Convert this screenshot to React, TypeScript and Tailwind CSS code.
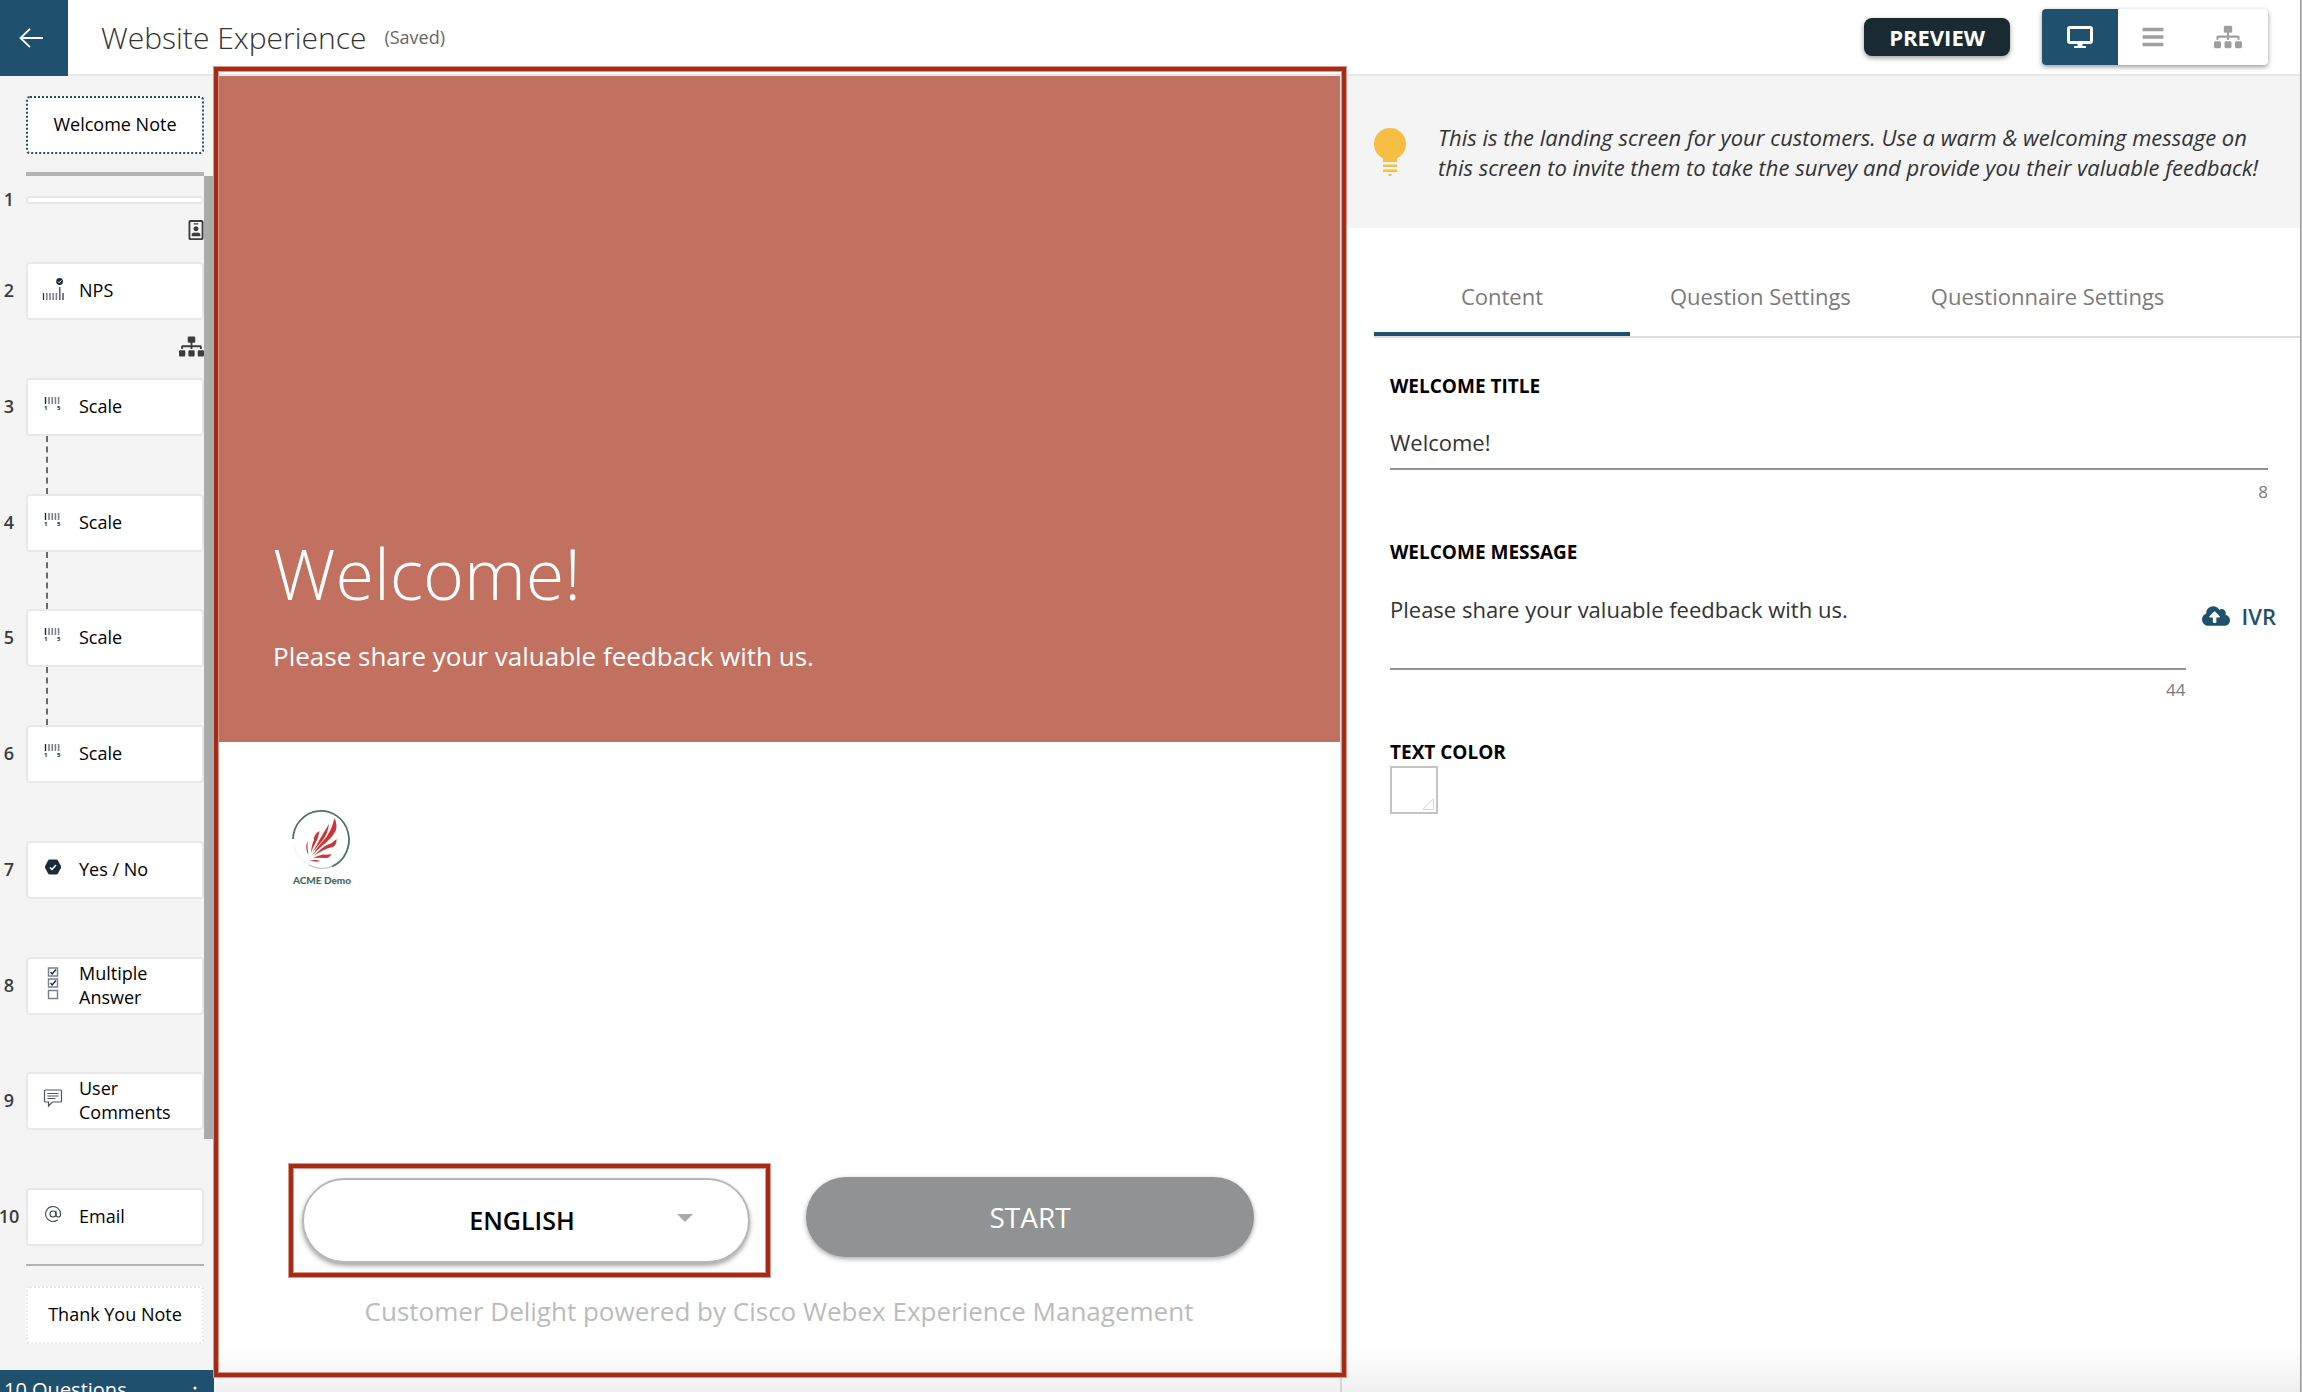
import { clsx } from "clsx";
import { AtSign } from "lucide-react";
import { memo, useState, type ReactNode } from "react";
import { FaBars, FaCloudUploadAlt, FaRegIdBadge, FaSitemap } from "react-icons/fa";

type Question = {
    id: number;
    label?: string;
    icon?: ReactNode;
    badge?: ReactNode;
    linked?: boolean;
};

const ScaleIcon = () => (
    <svg className="size-6" viewBox="0 0 24 24" fill="none">
        <path d="M4.5 5v7" stroke="#1c2b3a" strokeWidth="1.4" />
        <path d="M8 5v7M11.2 5v7M14.4 5v7M17.6 5v7" stroke="#7b838c" strokeWidth="1.6" />
        <text x="3" y="18" fontSize="6" fontWeight="700" fill="#1c2b3a">
            1
        </text>
        <text x="16" y="18" fontSize="6" fontWeight="700" fill="#1c2b3a">
            5
        </text>
    </svg>
);

const NpsIcon = () => (
    <svg className="size-6" viewBox="0 0 24 24" fill="none">
        <path d="M2.5 17v7M22 17v7" stroke="#1c2b3a" strokeWidth="1.2" />
        <path d="M5.8 17v7M9 17v7M12.2 17v7M15.4 17v7" stroke="#7b838c" strokeWidth="1.6" />
        <path d="M18.8 11v13" stroke="#4a5560" strokeWidth="1.4" />
        <circle cx="18.6" cy="5.5" r="3.4" fill="#1c2b3a" />
        <path d="M17 5.5l1.2 1.2L20.4 4.4" stroke="#fff" />
    </svg>
);

const YesNoIcon = () => (
    <svg className="size-6" viewBox="0 0 24 24" fill="none">
        <path
            d="M8.6 4.5h6.8q1 0 1.5.9l3 5.6q.5 1 0 2l-3 5.6q-.5.9-1.5.9H8.6q-1 0-1.5-.9l-3-5.6q-.5-1 0-2l3-5.6q.5-.9 1.5-.9z"
            fill="#1c2b3a"
        />
        <path d="M9 12.5l2 2 4-4.5" stroke="#fff" strokeWidth="1.5" />
    </svg>
);

const MultipleIcon = () => (
    <svg className="h-9 w-3" viewBox="0 0 12 36" fill="none" stroke="#7b7f8c" strokeWidth="1.4">
        <path d="M1.5 3h9v8h-9zM1.5 14h9v8h-9zM1.5 25.5h9v8h-9z" />
        <path d="M3.5 7l1.7 2L9 4.5M3.5 18l1.7 2L9 15.5" stroke="#1c2b3a" />
    </svg>
);

const CommentsIcon = () => (
    <svg className="size-6" viewBox="0 0 24 24" fill="none" stroke="#4a5560" strokeWidth="1.2">
        <path d="M4.5 4h15q1 0 1 1v10q0 1-1 1h-8l-4 4v-4h-3q-1 0-1-1V5q0-1 1-1z" />
        <path d="M6.5 7.5h11M6.5 10h11M6.5 12.5h8" />
    </svg>
);

const MonitorIcon = () => (
    <svg className="h-6 w-[26px]" viewBox="0 0 26 24" fill="none">
        <rect x="1.5" y="2.5" width="23" height="15" rx="1.5" stroke="currentColor" strokeWidth="3" />
        <path d="M10.5 18h5v3h3.5v2H7v-2h3.5z" fill="currentColor" />
    </svg>
);

const BulbIcon = () => (
    <svg className="h-12 w-8 shrink-0" viewBox="0 0 32 48" fill="#f6bf43">
        <path d="M16 0a16 16 0 0 1 7 30.4V34H9v-3.6A16 16 0 0 1 16 0z" />
        <path d="M9 36.5h14v2.5H9zM9 41.5h14v2.5H9zM14 46h4l-1 2h-2z" />
    </svg>
);

const AcmeLogo = () => (
    <svg className="h-[82px] w-[66px]" viewBox="0 0 66 82" fill="none" role="img" aria-label="ACME Demo">
        <path d="M4 32A28 29 0 1 1 43 59.5" stroke="#4d7468" strokeWidth="1.8" />
        <path d="M43 59.5A28 29 0 0 1 20 58" stroke="#a9bfb8" strokeWidth="1.2" />
        <path d="M20 58Q8 51 5 40" stroke="#dfe8e5" strokeWidth=".8" />
        <g fill="#cf3338">
            <path d="M45.5 11Q49 19 46.5 24 43 31 34 38 27 44 23 49 28 40 34 34 42 26 45.5 11z" />
            <path d="M40 17q-1 9-6 16-6 7-11 13 5-8 8-14 4-7 9-15z" />
            <path d="M30.5 24q-1 7-4 12-3 5-4.5 10 .5-8 3-13-1-5 5.500-9z" />
            <path d="M18.5 34q-.5 7 1 14-4-7-1-14z" />
            <path d="M47.5 32q.5 6-4 8-9 2-18.5 9 7-8 13-11 6-2 9.5-6z" />
            <path d="M42.5 47q-2 4-5.5 4-7-.5-13 0 6-3 10-3.5 5 .5 8.5-.5z" />
            <path d="M20.5 53.5q6-1 11 .5-5 1.5-11-.5z" />
        </g>
        <text
            x="33"
            y="77"
            textAnchor="middle"
            fontSize="10"
            fontWeight="900"
            fill="#44695d"
            className="font-['Lato',sans-serif]"
        >
            ACME Demo
        </text>
    </svg>
);

const questions: Question[] = [
    { id: 2, label: "NPS", icon: <NpsIcon />, badge: <FaSitemap className="size-[25px]" /> },
    { id: 3, label: "Scale", icon: <ScaleIcon />, linked: true },
    { id: 4, label: "Scale", icon: <ScaleIcon />, linked: true },
    { id: 5, label: "Scale", icon: <ScaleIcon />, linked: true },
    { id: 6, label: "Scale", icon: <ScaleIcon /> },
    { id: 7, label: "Yes / No", icon: <YesNoIcon /> },
    { id: 8, label: "Multiple Answer", icon: <MultipleIcon /> },
    { id: 9, label: "User Comments", icon: <CommentsIcon /> },
    { id: 10, label: "Email", icon: <AtSign className="size-[18px] text-[#3a4652]" strokeWidth={1.5} /> },
];

const tabs = ["Content", "Question Settings", "Questionnaire Settings"];

const QuestionRow = ({ question, last }: { question: Question; last: boolean }) => (
    <li className={clsx("flex flex-col", last ? "shrink-0" : "flex-1")}>
        <div className="flex items-center">
            <span className="flex w-[26px] shrink-0 justify-center pr-2 pb-[2px] text-lg font-semibold text-[#3c3c3c]">
                {question.id}
            </span>
            <button className="flex h-[58px] flex-1 items-center rounded-sm border-2 border-[#e8e8e8] bg-white pb-[2px] text-left text-lg leading-6 text-black">
                <span className="flex w-[51px] shrink-0 justify-center pr-[2px] pb-1">{question.icon}</span>
                <span className="flex-1 pr-4">{question.label}</span>
            </button>
        </div>
        {question.badge && <div className="flex justify-end pt-[14px] text-[#3c3c3c]">{question.badge}</div>}
        {question.linked && <div className="ml-[46px] flex-1 border-l-2 border-dashed border-[#6b6b6b]" />}
    </li>
);

const Sidebar = () => (
    <aside className="flex min-h-0 flex-col bg-[#f4f4f4]">
        <div className="pt-5 pr-[10px] pl-[26px]">
            <button className="h-[58px] w-full rounded-sm border-2 border-dotted border-[#1f506e] bg-white pb-[2px] text-lg text-black">
                Welcome Note
            </button>
            <div className="mt-[18px] h-1 bg-[#b3b3b3]" />
        </div>
        <div className="flex min-h-0 flex-1">
            <ol className="flex flex-1 flex-col pt-3">
                <li className="flex h-[74px] shrink-0 flex-col">
                    <div className="flex items-center">
                        <span className="flex w-[26px] shrink-0 justify-center pr-2 pb-[2px] text-lg leading-[22px] font-semibold text-[#3c3c3c]">
                            1
                        </span>
                        <button
                            aria-label="Question 1"
                            className="h-2 flex-1 rounded-sm border-2 border-[#e8e8e8] bg-white"
                        />
                    </div>
                    <FaRegIdBadge className="mt-2 h-5 w-4 self-end text-[#3c3c3c]" />
                </li>
                {questions.map((q, i) => (
                    <QuestionRow key={q.id} question={q} last={i === questions.length - 1} />
                ))}
            </ol>
            <div className="w-[10px] shrink-0">
                <div className="h-9/10 bg-[#ababab]" />
            </div>
        </div>
        <div className="pt-[18px] pr-[10px] pb-[26px] pl-[26px]">
            <div className="h-[2px] bg-[#b3b3b3]" />
            <button className="mt-5 h-[58px] w-full rounded-sm border-2 border-dotted border-[#e8e8e8] bg-white pb-[2px] text-lg text-black">
                Thank You Note
            </button>
        </div>
        <div className="flex h-[22px] shrink-0 items-start justify-between bg-[#1f506e] pr-3 pl-1 text-xl leading-10 text-white">
            <span>10 Questions</span>
            <svg className="h-6 w-[14px]" viewBox="0 0 14 24" fill="currentColor">
                <circle cx="7" cy="18" r="1.5" />
            </svg>
        </div>
    </aside>
);

const Preview = () => (
    <main className="flex min-h-0 flex-col border-r-2 border-[#e0e0e0] bg-white pl-1">
        <div className="flex h-[666px] shrink-0 flex-col justify-end bg-[#c27060] pb-[68px] pl-[55px] text-white">
            <h2 className="text-[70px] leading-[94px] font-light">Welcome!</h2>
            <p className="mt-[18px] text-[26px] leading-9">Please share your valuable feedback with us.</p>
        </div>
        <div className="flex flex-1 flex-col px-[71px] pt-[65px] pb-[63px]">
            <AcmeLogo />
            <div className="mt-auto mr-[15px] flex items-center gap-9">
                <div className="flex-1 border-4 border-[#a62b17] py-[10px] pr-4 pl-[9px] shadow-[0_0_0_1px_#d9988c,inset_0_0_0_1px_#d9988c]">
                    <div className="relative">
                        <select
                            aria-label="Language"
                            className="h-[85px] w-full appearance-none rounded-full border-2 border-[#b8b8b8] bg-white pr-2 text-center text-[25px] font-semibold text-black shadow-[0_3px_5px_rgba(0,0,0,0.35)]"
                        >
                            <option>ENGLISH</option>
                        </select>
                        <span className="pointer-events-none absolute top-9 right-[57px] border-x-8 border-t-8 border-x-transparent border-t-[#aaaaaa]" />
                    </div>
                </div>
                <button className="mb-2 h-20 w-[448px] rounded-full bg-[#919294] text-[28px] font-medium text-white shadow-[0_2px_5px_rgba(0,0,0,0.35)]">
                    START
                </button>
            </div>
            <p className="mt-4 text-center text-[26px] leading-9 text-[#bbbbbb]">
                Customer Delight powered by Cisco Webex Experience Management
            </p>
        </div>
    </main>
);

const Settings = () => {
    const [active, setActive] = useState(tabs[0]);

    return (
        <section className="flex flex-col bg-white">
            <div className="flex h-[152px] items-center gap-8 bg-[#f4f4f4] pr-7 pl-8">
                <BulbIcon />
                <p className="text-[22px] leading-[30px] text-[#333333] italic">
                    This is the landing screen for your customers. Use a warm &amp; welcoming message on
                    <br />
                    this screen to invite them to take the survey and provide you their valuable feedback!
                </p>
            </div>

            <div role="tablist" className="mt-8 ml-8 flex border-b-2 border-[#dddddd]">
                {tabs.map((tab) => (
                    <button
                        key={tab}
                        role="tab"
                        aria-selected={active === tab}
                        className={clsx(
                            "h-[76px] border-b-4 px-10 text-[22px] text-[#7a7a7a]",
                            active === tab ? "min-w-[256px] border-[#1f506e]" : "border-transparent"
                        )}
                        onClick={() => setActive(tab)}
                    >
                        {tab}
                    </button>
                ))}
            </div>

            <div className="flex flex-col pr-8 pl-12">
                <label htmlFor="welcome-title" className="mt-[34px] text-[19px] leading-7 font-bold text-black">
                    WELCOME TITLE
                </label>
                <input
                    id="welcome-title"
                    defaultValue="Welcome!"
                    className="mt-[22px] h-12 border-b-2 border-[#919191] pb-[6px] text-[22px] text-[#333333] outline-none"
                />
                <span className="mt-2 text-right text-[17px] leading-7 text-[#7a7a7a]">8</span>

                <label htmlFor="welcome-message" className="mt-8 text-[19px] leading-7 font-bold text-black">
                    WELCOME MESSAGE
                </label>
                <div className="flex">
                    <div className="flex flex-1 flex-col">
                        <textarea
                            id="welcome-message"
                            defaultValue="Please share your valuable feedback with us."
                            className="mt-7 h-[76px] resize-none border-b-2 border-[#919191] text-[22px] leading-[30px] text-[#333333] outline-none"
                        />
                        <span className="mt-2 text-right text-[17px] leading-6 text-[#7a7a7a]">44</span>
                    </div>
                    <button className="-mr-2 mt-8 ml-4 flex h-9 items-center gap-3 text-[22px] font-semibold text-[#1f506e]">
                        <FaCloudUploadAlt className="size-7" />
                        IVR
                    </button>
                </div>

                <span id="text-color" className="mt-9 text-[19px] leading-7 font-bold text-black">
                    TEXT COLOR
                </span>
                <button
                    aria-labelledby="text-color"
                    className="flex size-12 items-end justify-end border-2 border-[#c4c4c4] p-[2px]"
                >
                    <svg className="size-3" viewBox="0 0 12 12" fill="none" stroke="#d4d4d4">
                        <path d="M.8 11.5H11.5V.8z" />
                    </svg>
                </button>
            </div>
        </section>
    );
};

const Toolbar = () => (
    <header className="flex h-[76px] shrink-0 items-center border-b-2 border-[#e8e8e8] bg-white pr-8">
        <button
            aria-label="Back"
            className="flex h-[76px] w-[68px] items-center justify-center self-start bg-[#1f506e] pr-[6px]"
        >
            <svg className="h-5 w-6" viewBox="0 0 24 20" fill="none" stroke="#fff" strokeWidth="1.8">
                <path d="M24 10H1M11 .8L1.5 10l9.5 9.2" />
            </svg>
        </button>
        <h1 className="ml-[33px] text-[30px] font-light text-[#333333]">Website Experience</h1>
        <span className="ml-[18px] text-lg text-[#666666]">(Saved)</span>
        <button className="ml-auto h-[38px] rounded-lg bg-[#1a2a33] px-[25px] text-[22px] font-bold text-white shadow-[0_2px_5px_rgba(0,0,0,0.4)]">
            PREVIEW
        </button>
        <div className="ml-8 flex h-14 overflow-hidden rounded-sm bg-white text-[#9e9e9e] shadow-[0_2px_5px_rgba(0,0,0,0.4)]">
            <button aria-label="Desktop" className="flex w-[76px] items-center justify-center bg-[#1f506e] text-white">
                <MonitorIcon />
            </button>
            <button aria-label="List" className="flex w-[70px] items-center justify-center">
                <FaBars className="size-6" />
            </button>
            <button aria-label="Flow" className="flex w-20 items-center justify-center">
                <FaSitemap className="size-7" />
            </button>
        </div>
    </header>
);

const App = memo(() => (
    <div className="flex h-screen overflow-hidden bg-white font-['Open_Sans','Noto_Sans',sans-serif]">
        <div className="flex min-w-0 flex-1 flex-col">
            <Toolbar />
            <div className="relative grid min-h-0 flex-1 grid-cols-[214px_1128fr_958fr]">
                <Sidebar />
                <Preview />
                <Settings />
                {/* Soft shade along the bottom of the workspace */}
                <div className="pointer-events-none absolute right-0 bottom-0 left-[214px] h-12 bg-linear-to-b from-transparent to-black/6" />
                {/* Highlight round the preview */}
                <div className="pointer-events-none absolute -top-[9px] bottom-[15px] left-[214px] w-[1132px] border-4 border-[#a62b17] shadow-[0_0_0_1px_#d9988c,inset_0_0_0_1px_#d9988c]" />
            </div>
        </div>
        <div className="w-[2px] shrink-0 border-l border-[#999999] bg-[#c4c4c4]" />
    </div>
));

App.displayName = "App";

export default App;
